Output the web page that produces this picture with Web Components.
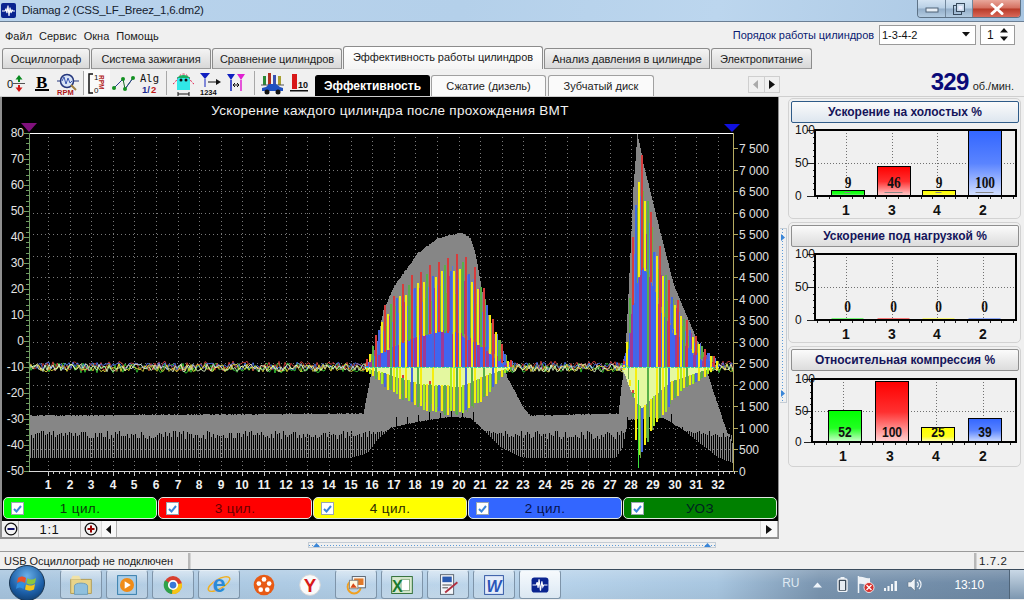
<!DOCTYPE html>
<html lang="ru">
<head>
<meta charset="utf-8">
<title>Diamag 2</title>
<style>
html, body { margin: 0; padding: 0; width: 1024px; height: 600px; overflow: hidden; background: #f0f0f0; font-family: "Liberation Sans", Arial, sans-serif; }
app-window { display: block; }
</style>
</head>
<body>
<app-window>
  <win-title>Diamag 2 (CSS_LF_Breez_1,6.dm2)</win-title>
  <win-menu></win-menu>
  <tab-strip></tab-strip>
  <tool-strip></tool-strip>
  <main-area></main-area>
  <split-row></split-row>
  <status-line></status-line>
  <task-bar></task-bar>
</app-window>

<script>
const FONT = '"Liberation Sans", Arial, sans-serif';

class AppWindow extends HTMLElement {
  constructor() {
    super();
    this.attachShadow({mode: "open"}).innerHTML = `
    <style>:host { display: flex; flex-direction: column; width: 1024px; height: 600px; }</style>
    <slot></slot>`;
  }
}

class WinTitle extends HTMLElement {
  constructor() {
    super();
    this.attachShadow({mode: "open"}).innerHTML = `
    <style>
      :host { display: flex; align-items: flex-start; height: 22px; box-sizing: border-box; border-bottom: 1px solid #6b7f94;
        background: linear-gradient(100deg, #b9d3ec 0%, #b4d0ea 45%, #bcd6ee 70%, #a9c6e2 100%); font: 11.500px ${FONT}; color: #15212e; }
      svg.logo { margin: 3px 0 0 1px; flex: none; }
      .t { margin: 4px 0 0 6px; letter-spacing: -.2px; }
      .btns { margin: 0 3px 0 auto; display: flex; height: 18px; border: 1px solid #5d7286; border-top: 0; border-radius: 0 0 4px 4px; overflow: hidden; box-sizing: border-box; }
      .b { display: flex; align-items: center; justify-content: center; box-sizing: border-box; height: 100%;
        background: linear-gradient(#d3e3f2 0%, #b8cfe5 48%, #93aec9 52%, #b3cbe1 100%); border-right: 1px solid #72879c; }
      .x { background: linear-gradient(#e9a79b 0%, #d46f5f 48%, #b83a28 52%, #d9695a 100%); border-right: 0; }
    </style>
    <svg class="logo" width="15" height="15" viewBox="0 0 15 15"><rect width="15" height="15" rx="2" fill="#0a2490"/><path d="M1 8H4L5 6 6 10 7 2.500 8 13 9 4.500 10 10 11 7 12 8H14" fill="none" stroke="#fff" stroke-width="1.100"/></svg>
    <span class="t"><slot></slot></span>
    <div class="btns">
      <div class="b" style="width:28px"><svg width="14" height="8"><rect x="1" y="3" width="12" height="4" fill="#e8eff6" stroke="#4f6277"/></svg></div>
      <div class="b" style="width:27px"><svg width="12" height="12"><rect x=".5" y="2.500" width="8" height="9" fill="none" stroke="#37495c"/><rect x="3.500" y=".5" width="8" height="8" fill="#c6d8e9" stroke="#37495c"/><rect x="5.500" y="3" width="4" height="3.500" fill="#eef"/></svg></div>
      <div class="b x" style="width:47px"><svg width="16" height="12"><path d="M3 1.500L13 10.500M13 1.500L3 10.500" stroke="#fff" stroke-width="3" stroke-linecap="round"/></svg></div>
    </div>`;
  }
}

class WinMenu extends HTMLElement {
  constructor() {
    super();
    this.attachShadow({mode: "open"}).innerHTML = `
    <style>
      :host { display: flex; align-items: center; height: 25px; background: #f0f0f0; font: 11px ${FONT}; color: #1c1c1c; }
      nav { display: flex; gap: 7px; margin: 2px 0 0 5px; }
      .order { margin: 1px 0 0 auto; color: #0a1a70; letter-spacing: -.05px; }
      .box { display: flex; align-items: center; box-sizing: border-box; height: 20px; background: #fff; border: 1px solid #9a9a9a; color: #111; }
      .combo { width: 97px; margin-left: 5px; padding: 0 5px 0 2px; justify-content: space-between; }
      .spin { width: 35px; margin: 0 9px 0 4px; padding: 0 5px 0 6px; justify-content: space-between; font-size: 12px; }
    </style>
    <nav><span>Файл</span><span>Сервис</span><span>Окна</span><span>Помощь</span></nav>
    <span class="order">Порядок работы цилиндров</span>
    <div class="box combo"><span>1-3-4-2</span><svg width="8" height="5"><path d="M0 0H8L4 4.500Z" fill="#111"/></svg></div>
    <div class="box spin"><span>1</span><svg width="9" height="15"><path d="M0 5.500H8L4 1ZM0 9.500H8L4 14Z" fill="#111"/></svg></div>`;
  }
}

class TabStrip extends HTMLElement {
  constructor() {
    super();
    const tabs = [["Осциллограф",88],["Система зажигания",120],["Сравнение цилиндров",130],["Эффективность работы цилиндров",200,1],["Анализ давления в цилиндре",166],["Электропитание",101]];
    this.attachShadow({mode: "open"}).innerHTML = `
    <style>
      :host { display: flex; gap: 1px; height: 22px; padding-left: 2px; box-sizing: border-box; background: #f0f0f0; font: 11px ${FONT}; letter-spacing: -.05px; color: #1c1c1c; }
      .tab { box-sizing: border-box; height: 21px; margin-top: 1px; display: flex; align-items: center; justify-content: center; white-space: nowrap;
        border: 1px solid #8c8c8c; border-bottom: 1px solid #9a9a9a; border-radius: 3px 3px 0 0; background: linear-gradient(#f4f4f4, #d8d8d8); }
      .on { height: 23px; margin-top: -1px; background: linear-gradient(#fff, #f4f4f4); border-bottom: 0; padding-bottom: 2px; }
    </style>
    ${tabs.map(t => `<div class="tab${t[2] ? " on" : ""}" style="width:${t[1]}px">${t[0]}</div>`).join("")}`;
  }
}

class ToolStrip extends HTMLElement {
  constructor() {
    super();
    const txt = `font-family:${FONT.replace(/"/g, "'")}`;
    const icons = [
      `<text x="4" y="18" font-size="11" fill="#111" style="${txt}">0</text><path d="M10 13.500H22" stroke="#555"/><path d="M16 5L12.500 9.500H15V12H17V9.500H19.500Z" fill="#0a8a20"/><path d="M16 22L12.500 17.500H15V15H17V17.500H19.500Z" fill="#d01818"/>`,
      `<text x="7" y="18" font-size="17" font-weight="700" fill="#000" style="font-family:'Liberation Serif',serif">B</text><rect x="6" y="19" width="14" height="2" fill="#000"/>`,
      `<circle cx="12" cy="11" r="6.500" fill="#d8e4f6" stroke="#24367c" stroke-width="1.500"/><path d="M2 11H6M18 11H24" stroke="#24367c"/><path d="M7 11L9 7 11 14 13 8 15 13 17 11" fill="none" stroke="#3a56b0"/><path d="M16 15L21 20" stroke="#a08040" stroke-width="2"/><text x="2" y="25" font-size="7.500" font-weight="700" fill="#b01818" style="${txt}">RPM</text>`,
      `<path d="M9 4H5V23H9" fill="none" stroke="#111" stroke-width="1.500"/><text x="10" y="10" font-size="8" fill="#111" style="${txt}">1</text><text x="10" y="23" font-size="8" fill="#111" style="${txt}">0</text><text transform="translate(15,5) rotate(90)" font-size="6.500" font-weight="700" fill="#b01818" style="${txt}">RPM</text>`,
      `<path d="M4 18L13 9 15 19 23 8" fill="none" stroke="#1a6a28" stroke-width="1"/><path d="M4 18L13 9M15 19L23 8" stroke="#2a3a90"/><circle cx="4" cy="18" r="2" fill="#129020"/><circle cx="13" cy="9" r="2" fill="#129020"/><circle cx="15" cy="19" r="2" fill="#129020"/><circle cx="23" cy="8" r="2" fill="#129020"/>`,
      `<text x="4" y="12" font-size="10.500" fill="#111" style="font-family:'DejaVu Sans Mono',monospace">Alg</text><text x="6" y="23" font-size="9.500" font-weight="700" fill="#1a2a90" style="${txt}">1/</text><text x="15" y="23" font-size="9.500" font-weight="700" fill="#c01818" style="${txt}">2</text>`,
      `<rect x="7" y="7" width="13" height="13" fill="#30e8e8"/><path d="M3 14C7 12 8 4 13.500 4S20 12 24 14" fill="none" stroke="#e02050" stroke-dasharray="2 1.500"/><path d="M7 8C10 4 17 4 20 8" fill="#18b060"/><circle cx="11" cy="10" r="1.500" fill="#111"/><circle cx="16" cy="10" r="1.500" fill="#111"/><path d="M8 24H19M8 22V26M19 22V26" stroke="#111"/>`,
      `<path d="M3 3H13L8 9Z" fill="#1020c0"/><path d="M8 9V17" stroke="#1020c0"/><path d="M11 12H20" stroke="#111"/><path d="M24 12L19 9V15Z" fill="#111"/><text x="3" y="25" font-size="7.500" font-weight="700" fill="#111" style="${txt}">1234</text>`,
      `<path d="M3 4H11L7 10Z" fill="#1020c0"/><path d="M7 10V21" stroke="#1020c0" stroke-width="1.500"/><path d="M13 4H21L17 10Z" fill="#e020d0"/><path d="M17 10V21" stroke="#e020d0" stroke-width="1.500"/><path d="M9 15H15M9 15L11 13M9 15L11 17M15 15L13 13M15 15L13 17" stroke="#111"/>`,
      `<rect x="3" y="6" width="3" height="9" fill="#2a8a38"/><rect x="8" y="3" width="3" height="12" fill="#b03020"/><rect x="13" y="5" width="3" height="10" fill="#3a50b0"/><rect x="18" y="6" width="3" height="9" fill="#a8a030"/><path d="M1 15H24" stroke="#555"/><path d="M2 21V18L6 17 9 14H16L20 17 23 18V21Z" fill="#1d4fc0"/><circle cx="7" cy="22" r="2.500" fill="#111"/><circle cx="18" cy="22" r="2.500" fill="#111"/>`,
      `<rect x="4" y="4" width="5" height="15" fill="#d81818"/><rect x="2" y="20" width="18" height="1.500" fill="#111"/><text x="10" y="18" font-size="9" font-weight="700" fill="#111" style="${txt}">10</text>`
    ];
    const cell = (i, on, w) => `<div class="c${on ? " on" : ""}"${w ? ` style="width:${w}px"` : ""}><svg width="26" height="26" viewBox="0 0 26 26">${icons[i]}</svg></div>`;
    this.attachShadow({mode: "open"}).innerHTML = `
    <style>
      :host { display: flex; align-items: flex-start; height: 28px; padding: 1px 0 0 3px; box-sizing: border-box; background: #f0f0f0; font: 11px ${FONT}; color: #1c1c1c; border-bottom: 1px solid #cfcfcf; }
      .c { width: 26px; height: 26px; flex: none; }
      .on { background: #fafafa; }
      .sep { width: 1px; height: 24px; margin: 1px 3px 0 3px; background: #a8a8a8; flex: none; }
      .sub { box-sizing: border-box; height: 21px; margin-top: 5px; display: flex; align-items: center; justify-content: center; border: 1px solid #a0a0a0; border-bottom: 0; border-radius: 3px 3px 0 0; background: #fafafa; }
      .black { background: #000; color: #fff; border-color: #000; font-weight: 700; font-size: 12px; }
      .nav { display: flex; margin: 6px 0 0 94px; border: 1px solid #cfcfcf; height: 17px; width: 32px; box-sizing: border-box; }
      .nav div { flex: 1; display: flex; align-items: center; justify-content: center; }
      .nav div + div { border-left: 1px solid #cfcfcf; }
      .rpm { margin: -1px 10px 0 auto; display: flex; align-items: baseline; gap: 4px; color: #0a0a78; font-size: 11px; }
      .rpm b { font-size: 24px; line-height: 26px; letter-spacing: -.7px; }
      .rpm span { color: #1c1c1c; }
    </style>
    ${cell(0)}${cell(1)}${cell(2)}<div class="sep" style="margin:1px 0 0 2px"></div>${cell(3, 1)}${cell(4)}${cell(5, 0, 27)}<div class="sep"></div>${cell(6, 0, 27)}${cell(7, 0, 27)}${cell(8, 0, 27)}<div class="sep" style="margin-right:5px"></div>${cell(9, 0, 28)}${cell(10, 0, 27)}
    <div class="sub black" style="width:115px;margin-left:0">Эффективность</div>
    <div class="sub" style="width:115px;margin-left:1px">Сжатие (дизель)</div>
    <div class="sub" style="width:106px;margin-left:2px">Зубчатый диск</div>
    <div class="nav"><div><svg width="6" height="9"><path d="M5 0V9L0 4.500Z" fill="#aaa"/></svg></div><div><svg width="6" height="9"><path d="M0 0V9L6 4.500Z" fill="#111"/></svg></div></div>
    <div class="rpm"><b>329</b><span>об./мин.</span></div>`;
  }
}

/* seeded, so each photograph is the same */
let seed = 12345;
function rnd() { seed = (seed * 1664525 + 1013904223) % 4294967296; return seed / 4294967296; }
function env(pts, x) {
  if (x <= pts[0][0]) return pts[0][1];
  for (let i = 1; i < pts.length; i++) {
    if (x <= pts[i][0]) {
      const a = pts[i - 1], b = pts[i];
      return a[1] + (b[1] - a[1]) * (x - a[0]) / (b[0] - a[0]);
    }
  }
  return pts[pts.length - 1][1];
}

class ScopeChart extends HTMLElement {
  constructor() {
    super();
    this.attachShadow({mode: "open"}).innerHTML = `
    <style>
      :host { display: block; width: 776px; height: 400px; background: #000; }
      svg { display: block; }
      text { font-family: ${FONT}; }
    </style>
    <svg width="776" height="400" viewBox="2 97 776 400">${this.draw()}</svg>`;
  }
  draw() {
    const top = 133, bot = 471, L = 29, R = 733, base = 367;
    let s = `<text x="390" y="115" text-anchor="middle" font-size="13.500" fill="#f2f2f2" letter-spacing=".28">Ускорение каждого цилиндра после прохождения ВМТ</text>`;

    // grid
    let grid = "";
    for (let i = 0; i < 32; i++) { const x = Math.round(48 + i * 21.61) + .5; grid += `M${x} ${top}V${bot}`; }
    for (let i = 1; i < 15; i++) { const y = Math.round(471 - i * 21.53) + .5; grid += `M${L} ${y}H${R}`; }
    s += `<path d="${grid}" stroke="#7a7a7a" stroke-dasharray="1 3" fill="none"/>`;

    // gray envelope
    const gTop = [[29,415],[363,413],[370,377],[383,310],[393,287],[417,253],[437,238],[460,232],[470,237],[475,253],[483,297],[497,347],[507,377],[523,407],[530,415],[618,413],[625,353],[630,253],[633,187],[637,133],[643,163],[657,220],[673,283],[687,317],[700,347],[707,373],[717,403],[725,427],[732,443]];
    const gBot = [[29,458],[350,458],[367,453],[377,440],[390,428],[417,422],[450,417],[470,418],[483,430],[500,447],[520,457],[530,458],[615,458],[622,448],[628,420],[663,418],[683,430],[717,457],[732,463]];
    let g = "";
    for (let x = L + 1; x < R; x++) {
      const t = env(gTop, x) + rnd(), b = env(gBot, x);
      const depth = Math.max(.5, b - 431);
      let end = b;
      if (x % 2) end = b - depth * (.7 + rnd() * .3);
      if (b < 431 && x % 11 == 0) end = b - 2 - rnd() * 8;
      g += `M${x + .5} ${t.toFixed(1)}V${end.toFixed(1)}`;
    }
    s += `<path d="${g}" stroke="#868686" fill="none" shape-rendering="crispEdges"/>`;

    // baseline noise
    ["#39e23c", "#e8443c", "#4a78ff", "#f4f040", "#e8ffd0"].forEach((c, k) => {
      let d = "";
      for (let x = L; x <= R; x += 2) {
        const y = base + (rnd() - .5) * (k < 2 ? 10 : 8) - (k == 1 || k == 2 ? 1 : -1);
        d += (d ? "L" : "M") + x + " " + y.toFixed(1);
      }
      s += `<path d="${d}" stroke="${c}" fill="none" stroke-width=".8"/>`;
    });

    // two combustion humps
    const humps = [
      { a: 365, b: 510,
        up: [[365,362],[373,340],[383,307],[400,283],[417,268],[450,252],[467,252],[483,287],[497,333],[507,360]],
        dn: [[365,372],[373,377],[383,387],[400,400],[417,408],[440,417],[463,417],[483,400],[497,383],[507,370]],
        band: [[365,365],[373,355],[400,342],[417,335],[440,330],[460,333],[483,347],[497,358],[507,365]],
        low: [[365,369],[385,374],[420,385],[460,387],[490,374],[507,369]] },
      { a: 622, b: 718,
        up: [[622,365],[625,353],[628,307],[632,230],[637,135],[643,163],[653,227],[667,273],[680,307],[690,327],[703,347],[717,360]],
        dn: [[622,368],[625,360],[632,397],[637,470],[643,453],[652,430],[667,410],[683,390],[700,380],[713,370]],
        band: [[622,366],[628,340],[634,285],[642,265],[650,280],[660,310],[675,335],[690,350],[705,360],[717,365]],
        low: [[622,368],[630,390],[640,410],[652,398],[670,382],[700,372],[715,368]] }
    ];
    const P = { blue0: "", purple: "", pale: "", thin: "", olive: "", red: "", green: "", yellow: "", blue: "", lime: "" };
    const seg = (c, x, y1, y2) => { P[c] += `M${x} ${Math.round(y1)}V${Math.round(y2)}`; };
    humps.forEach(h => {
      for (let x = h.a; x <= h.b; x++) {
        const bt = env(h.band, x), lw = env(h.low, x);
        seg(x % 9 < 3 ? "purple" : "blue0", x + .5, bt + (rnd() - .5) * 6, base);
        seg("pale", x + .5, base, lw);
      }
      let i = 0;
      for (let x = h.a + 1; x <= h.b; x += 3, i++) {
        const u = env(h.up, x), d = env(h.dn, x), bt = env(h.band, x), lw = env(h.low, x);
        const c = ["red", "yellow", "green", "red", "blue", "yellow"][i % 6];
        const f = { red: .94, green: .86, yellow: .8, blue: .82 }[c] + rnd() * .07;
        const through = rnd() < .42;
        seg(c, x + 1, base - (base - u) * f, through ? base : bt + 2);
        // the 1 px gap takes a shorter trace, above and below the baseline
        const g1 = ["thin", "olive", "purple", "thin", "olive"][i % 5];
        seg(g1, x + 2.5, base - (base - u) * (.62 + rnd() * .26), bt);
        seg(i % 2 ? "olive" : "lime1", x + 2.5, lw, base + (d - base) * (.8 + rnd() * .15));
        const c2 = ["yellow", "lime", "yellow", "green", "yellow", "lime", "blue", "yellow", "green"][i % 9];
        seg(c2, x + 1, through ? base : lw - 1, base + (d - base) * (.88 + rnd() * .12));
        if (i % 9 == 3) seg("red", x + 1, lw - 4, Math.min(d, lw + 10));
      }
    });
    const col = { blue0: ["#3f66f0", 1], purple: ["#9c3a98", 1], pale: ["#e4f8a0", 1], thin: ["#5a78e0", 1], olive: ["#70a848", 1], lime1: ["#b8f028", 1], red: ["#d83c3c", 2], green: ["#58b048", 2], yellow: ["#f6ee10", 2], blue: ["#4468e0", 2], lime: ["#a8f020", 2] };
    Object.keys(col).forEach(k => { s += `<path d="${P[k]}" stroke="${col[k][0]}" stroke-width="${col[k][1]}" fill="none" shape-rendering="crispEdges"/>`; });
    s += `<path d="M366 367.500H508M623 367.500H716" stroke="#40d8a0" stroke-dasharray="3 1"/>`;
    s += `<path d="M638.500 380V468" stroke="#39e23c"/>`;

    // axes
    s += `<path d="M${L} ${top + .5}H${R}" stroke="#fff" stroke-width="1"/><path d="M${L} ${bot + .5}H${R}" stroke="#d8d8d8"/>`;
    s += `<path d="M${L + .5} ${top}V${bot}" stroke="#6f9c62" stroke-width="1"/><path d="M${R + .5} ${top}V${bot}" stroke="#b5ab62" stroke-width="1"/>`;
    let t1 = "", t2 = "", t3 = "";
    for (let v = 80, i = 0; v >= -50; v -= 10, i++) {
      const y = top + i * 26;
      t1 += `M24 ${y + .5}H${L}`;
      s += `<text x="24" y="${y + 4}" text-anchor="end" font-size="12" fill="#e4e4e4">${v}</text>`;
    }
    for (let i = 0; i < 65; i++) { t1 += `M26 ${Math.round(top + i * 5.2) + .5}H${L}`; }
    for (let v = 0; v <= 7500; v += 500) {
      const y = Math.round(471 - v / 500 * 21.53);
      t2 += `M${R} ${y + .5}H738`;
      const l = v >= 1000 ? Math.floor(v / 1000) + " " + String(v % 1000).padStart(3, "0") : v;
      s += `<text x="739" y="${y + 5}" font-size="12" fill="#e0e0e0">${l}</text>`;
    }
    for (let i = 0; i < 32; i++) {
      const x = Math.round(48 + i * 21.61);
      t3 += `M${x + .5} ${bot}V${bot + 5}`;
      for (let k = 1; k < 4; k++) t3 += `M${Math.round(x + k * 5.4) + .5} ${bot}V${bot + 3}`;
      s += `<text x="${x}" y="489" text-anchor="middle" font-size="12" font-weight="700" fill="#f0f0f0">${i + 1}</text>`;
    }
    s += `<path d="${t1}" stroke="#6f9c62"/><path d="${t2}" stroke="#b5ab62"/><path d="${t3}" stroke="#c8c8c8"/>`;
    s += `<path d="M21 123H37L29 132Z" fill="#80107c"/><path d="M724 124H740L732 132Z" fill="#1010e0"/>`;
    return s;
  }
}

class CylLegend extends HTMLElement {
  constructor() {
    super();
    const items = [["1 цил.", "#00ff00", "#0a3a0a"], ["3 цил.", "#ff0000", "#600"], ["4 цил.", "#ffff00", "#2a2a00"], ["2 цил.", "#3366ff", "#06124a"], ["УОЗ", "#008000", "#022"]];
    this.attachShadow({mode: "open"}).innerHTML = `
    <style>
      :host { display: flex; gap: 1px; height: 22px; margin-bottom: 2px; padding-left: 1px; background: #000; font: 13.500px ${FONT}; }
      .i { width: 154px; box-sizing: border-box; border: 1px solid #dfe7df; border-radius: 5px; display: flex; align-items: center; position: relative; justify-content: center; letter-spacing: .4px; }
      .k { position: absolute; left: 7px; top: 4px; width: 13px; height: 13px; box-sizing: border-box; background: #fff; border: 1px solid #9aa6b2; display: flex; align-items: center; justify-content: center; }
    </style>
    ${items.map(t => `<div class="i" style="background:${t[1]};color:${t[2]}"><span class="k"><svg width="9" height="8"><path d="M1 4L3.500 6.500 8 1" fill="none" stroke="#3a86d8" stroke-width="2"/></svg></span>${t[0]}</div>`).join("")}`;
  }
}

class ScaleBar extends HTMLElement {
  constructor() {
    super();
    this.attachShadow({mode: "open"}).innerHTML = `
    <style>
      :host { display: flex; align-items: stretch; height: 16px; background: #f0f0f0; font: 13px ${FONT}; color: #111; }
      .r { width: 17px; display: flex; align-items: center; justify-content: center; }
      .v { width: 63px; display: flex; align-items: center; justify-content: center; border-left: 1px solid #b8b8b8; border-right: 1px solid #b8b8b8; box-sizing: border-box; margin-left: -1px; letter-spacing: .6px; }
      .a { width: 16px; display: flex; align-items: center; justify-content: center; background: #f8f8f8; border-right: 1px solid #b0b0b0; border-left: 1px solid #d8d8d8; box-sizing: border-box; }
      .t { flex: 1; background: #f2f2f2; }
    </style>
    <div class="r"><svg width="14" height="14"><circle cx="7" cy="7" r="5.800" fill="#f4f4f4" stroke="#111" stroke-width="1.300"/><rect x="3.500" y="6" width="7" height="2" fill="#10106a"/></svg></div>
    <div class="v">1:1</div>
    <div class="r" style="margin-left:1px"><svg width="14" height="14"><circle cx="7" cy="7" r="5.800" fill="#f4f4f4" stroke="#111" stroke-width="1.300"/><path d="M3.500 7H10.500M7 3.500V10.500" stroke="#900" stroke-width="2"/></svg></div>
    <div class="a" style="margin-left:2px"><svg width="6" height="9"><path d="M5 0V9L0 4.500Z" fill="#111"/></svg></div>
    <div class="t"></div>
    <div class="a" style="width:18px"><svg width="6" height="9"><path d="M0 0V9L6 4.500Z" fill="#111"/></svg></div>`;
  }
}

class ScopePanel extends HTMLElement {
  constructor() {
    super();
    this.attachShadow({mode: "open"}).innerHTML = `
    <style>:host { display: block; width: 779px; flex: none; box-sizing: border-box; border: solid #8f8f8f; border-width: 0 1px 2px 2px; background: #000; }</style>
    <scope-chart></scope-chart><cyl-legend></cyl-legend><scale-bar></scale-bar>`;
  }
}

class BarCard extends HTMLElement {
  constructor() { super(); this.attachShadow({mode: "open"}); }
  connectedCallback() {
    const c = JSON.parse(this.dataset.cfg);
    const pt = c.top, pb = c.top + c.h, pl = c.left, pr = 227;
    const fills = ["g", "r", "y", "b"];
    let s = `<defs>
      <linearGradient id="g" x2="0" y2="1"><stop offset="0" stop-color="#00ff00"/><stop offset=".55" stop-color="#22ff22"/><stop offset="1" stop-color="#d8ffd8"/></linearGradient>
      <linearGradient id="r" x2="0" y2="1"><stop offset="0" stop-color="#ff0000"/><stop offset=".5" stop-color="#ff3030"/><stop offset="1" stop-color="#ffd8d8"/></linearGradient>
      <linearGradient id="y" x2="0" y2="1"><stop offset="0" stop-color="#ffff00"/><stop offset=".6" stop-color="#ffff20"/><stop offset="1" stop-color="#ffffd8"/></linearGradient>
      <linearGradient id="b" x2="0" y2="1"><stop offset="0" stop-color="#3366ff"/><stop offset=".5" stop-color="#5a84ff"/><stop offset="1" stop-color="#d8e4ff"/></linearGradient>
    </defs>`;
    const mid = Math.round((pt + pb) / 2);
    let dots = `M${pl} ${mid + .5}H${pr}`;
    c.cx.forEach(x => { dots += `M${x + .5} ${pt}V${pb}`; });
    s += `<path d="${dots}" stroke="#707070" stroke-dasharray="1 2" fill="none"/>`;
    let ticks = "";
    for (let y = pt, i = 0; i <= 10; i++, y += c.h / 10) ticks += `M${pl - (i % 5 ? 2 : 8)} ${Math.round(y) + .5}H${pl}`;
    for (let x = pl + 2; x < pr; x += 11.500) ticks += `M${Math.round(x) + .5} ${pb}V${pb + 3}`;
    s += `<path d="${ticks}" stroke="#222" fill="none"/>`;
    c.bars.forEach((b, i) => {
      const y = b[2];
      s += `<rect x="${b[0] + .5}" y="${y + .5}" width="${b[1]}" height="${pb - y}" fill="url(#${fills[i]})" stroke="${pb - y > 2 ? "#000" : "none"}"/>`;
    });
    s += `<rect x="${pl}" y="${pt}" width="${pr - pl}" height="${c.h}" fill="none" stroke="#000" stroke-width="2"/>`;
    c.bars.forEach((b, i) => {
      const y = b[2];
      if (c.dash && pb - y > 20) s += `<rect x="${b[0] + b[1] / 2 - 9}" y="${pb - 4}" width="18" height="1" fill="#888"/>`;
      else if (c.dash) s += `<rect x="${b[0] + b[1] / 2 - 3}" y="${pb - 4}" width="6" height="1" fill="#888"/>`;
      const w = String(c.vals[i]).length * c.vd;
      s += `<text x="${b[0] + b[1] / 2 + .5 - w / 2}" y="${pb - c.vo}" textLength="${w}" lengthAdjust="spacingAndGlyphs" font-size="${c.vs}" font-weight="${c.vw}" fill="#111" style="font-family:'${c.vf}'">${c.vals[i]}</text>`;
      s += `<text x="${c.cx[i]}" y="${pb + 19}" text-anchor="middle" font-size="14" font-weight="700" fill="#111">${c.cats[i]}</text>`;
    });
    [[100, pt], [50, mid], [0, pb]].forEach(t => {
      s += `<text x="6" y="${t[1] + 4}" font-size="12" fill="#111">${t[0]}</text>`;
    });
    this.shadowRoot.innerHTML = `
    <style>
      :host { display: block; box-sizing: border-box; width: 233px; height: 121px; border: 1px solid #d2d2d2; border-radius: 5px; padding: 2px 2px 0 2px; background: #f0f0f0; }
      .h { box-sizing: border-box; height: 22px; width: 228px; display: flex; align-items: center; justify-content: center; border: 1px solid ${c.sel ? "#2f5b88" : "#8f8f8f"}; border-radius: 2px;
        background: linear-gradient(#fbfbfb, ${c.sel ? "#dde6ef" : "#dcdcdc"}); font: bold 12px ${FONT}; color: #14145a; }
      svg { display: block; margin-top: 1px; margin-left: -2px; }
      text { font-family: ${FONT}; }
    </style>
    <div class="h"><slot></slot></div>
    <svg width="231" height="94" viewBox="0 0 231 94">${s}</svg>`;
  }
}

class MainArea extends HTMLElement {
  constructor() {
    super();
    const serif = "Liberation Serif", sans = "Liberation Sans";
    const cards = [
      { title: "Ускорение на холостых %", cfg: { sel: 1, top: 6, h: 66, left: 26, cx: [57, 103, 148, 194], cats: [1, 3, 4, 2], vals: [9, 46, 9, 100], vs: 16, vd: 6.7, vw: 700, vf: serif, vo: 8, dash: 1,
        bars: [[42, 33, 66], [88, 33, 42], [133, 33, 66], [179, 33, 6]] } },
      { title: "Ускорение под нагрузкой %", cfg: { top: 6, h: 66, left: 26, cx: [57, 103, 148, 194], cats: [1, 3, 4, 2], vals: [0, 0, 0, 0], vs: 16, vd: 6.7, vw: 700, vf: serif, vo: 8,
        bars: [[42, 32, 70], [88, 32, 70], [133, 32, 70], [179, 32, 70]] } },
      { title: "Относительная компрессия %", cfg: { top: 7, h: 63, left: 23, cx: [54, 101, 147, 194], cats: [1, 3, 4, 2], vals: [52, 100, 25, 39], vs: 15, vd: 6.7, vw: 700, vf: sans, vo: 5,
        bars: [[39, 33, 38], [86, 33, 9], [132, 33, 55], [179, 33, 46]] } }
    ];
    this.attachShadow({mode: "open"}).innerHTML = `
    <style>
      :host { display: flex; height: 442px; background: #f0f0f0; }
      .grip { width: 7px; height: 175px; margin: 131px 0 0 1px; flex: none; box-sizing: border-box; border: 1px solid #c4ccd4; border-left: 0; display: flex; flex-direction: column; justify-content: space-between; align-items: center; padding: 5px 0; background-image: linear-gradient(#5a9ad8 50%, transparent 50%); background-size: 1px 3px; background-repeat: repeat-y; background-position: 2px 0; }
      .side { display: flex; flex-direction: column; gap: 3px; padding: 1px 0 0 1px; }
    </style>
    <scope-panel></scope-panel>
    <div class="grip"><svg width="4" height="7"><path d="M0 0V7L4 3.500Z" fill="#3a86d8"/></svg><svg width="4" height="7"><path d="M0 0V7L4 3.500Z" fill="#3a86d8"/></svg></div>
    <div class="side">${cards.map(c => `<bar-card data-cfg='${JSON.stringify(c.cfg)}'>${c.title}</bar-card>`).join("")}</div>`;
  }
}

class SplitRow extends HTMLElement {
  constructor() {
    super();
    this.attachShadow({mode: "open"}).innerHTML = `
    <style>
      :host { display: block; height: 13px; box-sizing: border-box; padding: 3px 0 0 308px; background: #f0f0f0; border-bottom: 1px solid #9a9a9a; }
      .g { width: 408px; height: 6px; box-sizing: border-box; border: 1px solid #c4ccd4; display: flex; justify-content: space-between; align-items: center; padding: 0 4px; background-image: linear-gradient(90deg, #5a9ad8 50%, transparent 50%); background-size: 3px 1px; background-repeat: repeat-x; background-position: 0 2px; }
    </style>
    <div class="g"><svg width="7" height="4"><path d="M0 4H7L3.500 0Z" fill="#3a86d8"/></svg><svg width="7" height="4"><path d="M0 4H7L3.500 0Z" fill="#3a86d8"/></svg></div>`;
  }
}

class StatusLine extends HTMLElement {
  constructor() {
    super();
    this.attachShadow({mode: "open"}).innerHTML = `
    <style>
      :host { display: flex; height: 17px; padding-top: 1px; box-sizing: content-box; background: #f0f0f0; font: 11px ${FONT}; letter-spacing: -.05px; color: #1c1c1c; line-height: 17px; margin-bottom: -1px; }
      div { box-sizing: border-box; border-right: 2px solid #b8b8b8; white-space: nowrap; overflow: hidden; }
      div + div { border-left: 1px solid #d4d4d4; }
    </style>
    <div style="width:190px;padding-left:4px;border-left:0">USB Осциллограф не подключен</div>
    <div style="width:786px"></div>
    <div style="flex:1;border-right:0;padding-left:2px;letter-spacing:.6px;font-size:11.500px">1.7.2</div>`;
  }
}

class TaskBar extends HTMLElement {
  constructor() {
    super();
    const txt = `font-family:${FONT.replace(/"/g, "'")}`;
    const ic = {
      folder: `<path d="M5 10V25H27V10Z" fill="#e8d48a" stroke="#b09a50"/><path d="M5 10L7 6H14L16 10Z" fill="#f0e2a8"/><path d="M9 17C9 13 23 13 23 17V26H9Z" fill="#8fc0de" stroke="#6d9cb8"/>`,
      media: `<rect x="6" y="6" width="20" height="20" fill="#a8cde8" stroke="#2f79a8"/><circle cx="16" cy="16" r="7.500" fill="#f08c18"/><path d="M13.500 12V20L20 16Z" fill="#fff"/>`,
      chrome: `<circle cx="16" cy="16" r="9.500" fill="#d84030"/><path d="M16 16L7.500 11A9.500 9.500 0 0 0 15 25.500Z" fill="#2fa24a"/><path d="M16 16L15 25.500A9.500 9.500 0 0 0 25.500 14Z" fill="#f5c518"/><circle cx="16" cy="16" r="4.500" fill="#3a78d8" stroke="#fff" stroke-width="1.800"/>`,
      ie: `<ellipse cx="16" cy="15" rx="13" ry="5" transform="rotate(-30 16 15)" fill="none" stroke="#f0b020" stroke-width="1.500"/><text x="16" y="23" text-anchor="middle" font-size="25" font-weight="700" fill="#2a8ad8" style="${txt}">e</text>`,
      film: `<circle cx="16" cy="16" r="11" fill="#e85a14"/><circle cx="16" cy="10" r="2.500" fill="#fff"/><circle cx="10.500" cy="14.500" r="2.500" fill="#fff"/><circle cx="21.500" cy="14.500" r="2.500" fill="#fff"/><circle cx="12.500" cy="21" r="2.500" fill="#fff"/><circle cx="19.500" cy="21" r="2.500" fill="#fff"/>`,
      ya: `<circle cx="16" cy="16" r="11" fill="#fafafa" stroke="#d8d8d8"/><text x="16" y="23" text-anchor="middle" font-size="20" font-weight="700" fill="#d81818" style="${txt}">Y</text>`,
      pics: `<circle cx="14" cy="18" r="7" fill="none" stroke="#f0a020" stroke-width="2"/><rect x="12" y="7" width="14" height="12" fill="#f8f8f8" stroke="#55606c"/><rect x="14" y="9" width="10" height="7" fill="#e07828"/><rect x="9" y="11" width="9" height="9" fill="#fff8e0" stroke="#888"/><path d="M10 19L13 14 17 19Z" fill="#d84818"/>`,
      excel: `<rect x="5" y="7" width="22" height="18" fill="#d8ead0" stroke="#2a6a30"/><rect x="15" y="10" width="9" height="12" fill="#fff" stroke="#86ad80"/><text x="11" y="23" text-anchor="middle" font-size="17" font-weight="700" fill="#1a7a30" style="${txt}">X</text>`,
      paint: `<rect x="8" y="5" width="14" height="21" fill="#f4f6fa" stroke="#55606c"/><rect x="10" y="7" width="10" height="6" fill="#2a5ab0"/><path d="M10 16H20M10 19H16" stroke="#444"/><path d="M26 13L13 24" stroke="#b03040" stroke-width="2"/>`,
      word: `<rect x="6" y="6" width="20" height="20" fill="#e4ecfa" stroke="#2a50a0"/><text x="16" y="23" text-anchor="middle" font-size="17" font-weight="700" font-style="italic" fill="#2a55b8" style="${txt}">W</text>`,
      diamag: `<rect x="7" y="8" width="18" height="16" rx="3" fill="#0a2490"/><path d="M8 16H12L13 13 14 19 15 10 16.500 22 18 12 19 18 20 16H24" fill="none" stroke="#fff" stroke-width="1.200"/>`
    };
    const btn = (k, m, on) => `<div class="b${on ? " on" : ""}" style="margin-left:${m}px"><svg width="32" height="30" viewBox="0 0 32 32">${ic[k]}</svg></div>`;
    const free = (k, m) => `<div class="f" style="margin-left:${m}px"><svg width="32" height="30" viewBox="0 0 32 32">${ic[k]}</svg></div>`;
    this.attachShadow({mode: "open"}).innerHTML = `
    <style>
      :host { display: flex; position: relative; height: 30px; box-sizing: border-box; border-top: 1px solid #3a4b5c; padding-left: 60px;
        background: linear-gradient(rgba(255,255,255,.18), rgba(255,255,255,0) 45%, rgba(0,0,0,.04)), linear-gradient(90deg, #a6c4de 0%, #b6d2ea 55%, #a8c6e0 70%, #7a95b0 80%, #6d88a4 100%); font: 12px ${FONT}; color: #fff; }
      .orb { position: absolute; left: 9px; top: -5px; }
      .b { width: 42px; height: 29px; box-sizing: border-box; border: 1px solid #7e94a9; border-top-color: #e4eef6; border-radius: 3px; background: linear-gradient(rgba(255,255,255,.42), rgba(255,255,255,.12) 50%, rgba(255,255,255,.26)); display: flex; align-items: center; justify-content: center; flex: none; }
      .on { background: linear-gradient(rgba(255,255,255,.85), rgba(255,255,255,.55)); }
      .f { width: 42px; height: 29px; display: flex; align-items: center; justify-content: center; flex: none; }
      .tray { margin-left: auto; display: flex; align-items: center; height: 29px; }
      .sd { width: 14px; height: 29px; margin-left: 25px; border-left: 1px solid #4f6478; background: linear-gradient(#c9d8e6, #7d97b0); }
    </style>
    <svg class="orb" width="36" height="36" viewBox="0 0 36 36">
      <defs><radialGradient id="o" cx=".5" cy=".3" r=".8"><stop offset="0" stop-color="#6ab0e8"/><stop offset=".6" stop-color="#1c5fa8"/><stop offset="1" stop-color="#0d3560"/></radialGradient></defs>
      <circle cx="18" cy="18" r="17.500" fill="url(#o)" stroke="#1a3550"/>
      <path d="M9 13C12 11 14 11 17 13L16 18C13 16 11 16 8 18Z" fill="#e8502a"/><path d="M18.500 13C21 15 24 15 27 13L26 18C23 20 20 20 17.500 18Z" fill="#8cc63f"/>
      <path d="M8 19C11 17 13 17 15.500 19L14.500 24C12 22 10 22 7 24Z" fill="#2f8ee0"/><path d="M17 19.500C20 21 23 21 26 19L25 24.500C22 26 19 26 16 24.500Z" fill="#f5c518"/>
    </svg>
    ${btn("folder", 0)}${btn("media", 4)}${btn("chrome", 4)}${btn("ie", 4)}${free("film", 3)}${free("ya", 4)}${btn("pics", 4)}${btn("excel", 4)}${btn("paint", 4)}${btn("word", 4)}${btn("diamag", 4, 1)}
    <div class="tray">
      <span style="color:#dfe9f2;margin:-4px 0 0 0">RU</span>
      <svg width="9" height="6" style="margin-left:14px"><path d="M0 5.500H9L4.500 .5Z" fill="#eef4fa"/></svg>
      <svg width="11" height="15" style="margin-left:15px"><rect x="1" y="2" width="9" height="12.500" rx="1.500" fill="#3c4a58" stroke="#f0f4f8" stroke-width="1.400"/><rect x="3" y="4" width="5" height="9" fill="#e6ecf2"/><rect x="3.500" y="0" width="4" height="2" fill="#f0f4f8"/></svg>
      <svg width="18" height="17" style="margin-left:9px"><path d="M1.500 0V17" stroke="#f0f4f8" stroke-width="1.500"/><path d="M2 1C6 0 9 3 13 2V9C9 10 6 7 2 8Z" fill="#eef2f6"/><circle cx="12" cy="11.500" r="5" fill="#d8302c" stroke="#fff" stroke-width=".8"/><path d="M9.500 9L14.500 14M14.500 9L9.500 14" stroke="#fff" stroke-width="1.300"/></svg>
      <svg width="16" height="12" style="margin-left:8px"><path d="M1 9h2v3H1zM4.500 7h2v5h-2zM8 5h2v7H8zM11.500 2h2.500v10h-2.500z" fill="#f2f5f8"/></svg>
      <svg width="15" height="15" style="margin-left:8px"><path d="M1 5H4L8 1V14L4 10H1Z" fill="#eef2f6" stroke="#5a6c7e" stroke-width=".5"/><path d="M10 5A3 3 0 0 1 10 10M12 3A6 6 0 0 1 12 12" fill="none" stroke="#f0f4f8" stroke-width="1.200"/></svg>
      <span style="margin-left:32px;letter-spacing:-.1px">13:10</span>
      <div class="sd"></div>
    </div>`;
  }
}

customElements.define("app-window", AppWindow);
customElements.define("win-title", WinTitle);
customElements.define("win-menu", WinMenu);
customElements.define("tab-strip", TabStrip);
customElements.define("tool-strip", ToolStrip);
customElements.define("scope-chart", ScopeChart);
customElements.define("cyl-legend", CylLegend);
customElements.define("scale-bar", ScaleBar);
customElements.define("scope-panel", ScopePanel);
customElements.define("bar-card", BarCard);
customElements.define("main-area", MainArea);
customElements.define("split-row", SplitRow);
customElements.define("status-line", StatusLine);
customElements.define("task-bar", TaskBar);
</script>
</body>
</html>
